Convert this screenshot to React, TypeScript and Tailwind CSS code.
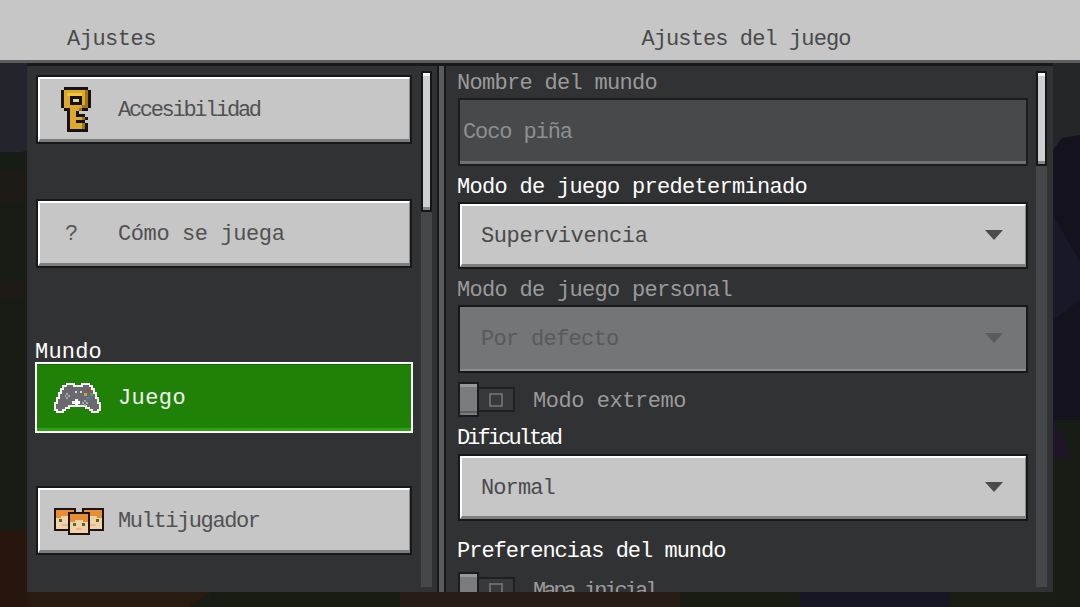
const KEY_ROWS = [
  ".KKKKKKKK.",
  "KYYYYYYYDK",
  "KYLLLLLYDK",
  "KYYKKKKYDK",
  "KYYKWWKYDK",
  "KYYKKKKYDK",
  "KYYYYYYDDK",
  ".KKYYYDKK.",
  "..KYYK....",
  "..KYYKKK..",
  "..KYYYYDK.",
  "..KYYKKK..",
  "..KYYYYDK.",
  "..KYYYYDK.",
  "..KKKKKKK.",
];

const KEY_COLORS: Record<string, string> = {
  K: "#17120a",
  Y: "#dca92c",
  L: "#f0c63f",
  D: "#9c7416",
  W: "#d8d2b8",
};

function KeyIcon() {
  return (
    <svg width="30" height="45" viewBox="0 0 10 15" shapeRendering="crispEdges">
      {KEY_ROWS.map((row, y) =>
        row.split("").map((c, x) =>
          c === "." ? null : (
            <rect key={`${x}-${y}`} x={x} y={y} width="1" height="1" fill={KEY_COLORS[c]} />
          )
        )
      )}
    </svg>
  );
}

function ControllerIcon() {
  return (
    <svg width="48" height="34" viewBox="0 0 50 35">
      <path
        d="M13 2h8v2h8V2h8v2h3v3h2v4h2v5h2v6h2v7h-2v2h-6v-2h-3v-2h-4v-2H16v2h-4v2H9v2H3v-2H1v-7h2v-6h2v-5h2V7h2V4h4z"
        fill="#69696e"
        stroke="#f4f4f4"
        strokeWidth="2"
        shapeRendering="crispEdges"
      />
      <g shapeRendering="crispEdges">
        <rect x="22" y="9" width="2" height="2" fill="#d8d8d8" />
        <rect x="27" y="9" width="2" height="2" fill="#d8d8d8" />
        <rect x="13" y="11" width="2" height="2" fill="#a8a8ac" />
        <rect x="11" y="13" width="2" height="2" fill="#a8a8ac" />
        <rect x="15" y="13" width="2" height="2" fill="#a8a8ac" />
        <rect x="13" y="15" width="2" height="2" fill="#a8a8ac" />
        <rect x="34" y="7" width="4" height="3" fill="#b0444c" />
        <rect x="31" y="11" width="3" height="3" fill="#c6a838" />
        <rect x="38" y="11" width="3" height="3" fill="#5a9a4c" />
        <rect x="33" y="15" width="4" height="3" fill="#3f86c4" />
        <rect x="19" y="20" width="8" height="3" fill="#ffffff" />
        <rect x="21.5" y="17.5" width="3" height="8" fill="#ffffff" />
        <rect x="31" y="19" width="2" height="2" fill="#a8a8ac" />
        <rect x="29" y="21" width="2" height="2" fill="#a8a8ac" />
        <rect x="33" y="21" width="2" height="2" fill="#a8a8ac" />
        <rect x="31" y="23" width="2" height="2" fill="#a8a8ac" />
      </g>
    </svg>
  );
}

function Face({ x, y }: { x: number; y: number }) {
  return (
    <g transform={`translate(${x} ${y})`} shapeRendering="crispEdges">
      <rect width="22" height="23" fill="#1a140e" />
      <rect x="2" y="2" width="18" height="19" fill="#f3d2a8" />
      <rect x="2" y="2" width="18" height="6" fill="#e98f33" />
      <rect x="2" y="8" width="5" height="2" fill="#e98f33" />
      <rect x="15" y="8" width="5" height="2" fill="#e98f33" />
      <rect x="5" y="11" width="3" height="3" fill="#4a6b2e" />
      <rect x="14" y="11" width="3" height="3" fill="#4a6b2e" />
      <rect x="8" y="16" width="6" height="2" fill="#e8b98c" />
    </g>
  );
}

function FacesIcon() {
  return (
    <svg width="50" height="28" viewBox="0 0 50 28">
      <Face x={0} y={0} />
      <Face x={28} y={0} />
      <Face x={14} y={4} />
    </svg>
  );
}

function ListButton({
  label,
  icon,
  labelClass,
  iconClass,
}: {
  label: string;
  icon: React.ReactNode;
  labelClass: string;
  iconClass: string;
}) {
  return (
    <div className="h-[69px] w-[376px] border-2 border-[#17181a]">
      <div className="flex h-full items-center border-t-2 border-l-2 border-r border-b-[3px] border-t-white border-l-white border-r-[#8b8b8b] border-b-[#7d7d7e] bg-[#c6c6c6]">
        <div className={`flex w-[78px] ${iconClass}`}>{icon}</div>
        <span className={`pt-[4px] text-[#515153] ${labelClass}`}>{label}</span>
      </div>
    </div>
  );
}

function Dropdown({
  label,
  labelClass,
  disabled,
  className,
}: {
  label: string;
  labelClass: string;
  disabled?: boolean;
  className: string;
}) {
  return (
    <div className={`w-[570px] border-2 border-[#17181a] ${className}`}>
      {disabled ? (
        <div className="flex h-full items-center justify-between border-b-2 border-b-[#8c8c8d] bg-[#747576] pl-[21px] pr-[23px]">
          <span className={`pt-[4px] text-[#59595b] ${labelClass}`}>{label}</span>
          <div className="h-0 w-0 border-x-[9px] border-t-[10px] border-x-transparent border-t-[#5b5b5d]" />
        </div>
      ) : (
        <div className="flex h-full items-center justify-between border-t-2 border-l-2 border-r border-b-[3px] border-t-white border-l-white border-r-[#8b8b8b] border-b-[#7d7d7e] bg-[#c6c6c6] pl-[19px] pr-[22px]">
          <span className={`pt-[4px] text-[#4a4a4c] ${labelClass}`}>{label}</span>
          <div className="h-0 w-0 border-x-[9px] border-t-[10px] border-x-transparent border-t-[#4b4b4d]" />
        </div>
      )}
    </div>
  );
}

function Toggle() {
  return (
    <div className="flex h-[35px] w-[57px] shrink-0 items-center">
      <div className="h-[35px] w-[21px] shrink-0 border-2 border-[#1b1c1e] bg-[#7b7c7d]">
        <div className="h-[3px] bg-[#98999a]" />
        <div className="mt-[24px] h-[2px] bg-[#5c5d5e]" />
      </div>
      <div className="flex h-[25px] w-[36px] items-center justify-center border-y-2 border-r-2 border-[#1f2022] bg-[#38393a]">
        <div className="h-[14px] w-[14px] border-2 border-[#68696a]" />
      </div>
    </div>
  );
}

function ScrollBar({ thumbClass }: { thumbClass: string }) {
  return (
    <div className="mt-[5px] flex h-[516px] w-[11px] flex-col bg-[#46474a]">
      <div className={`w-[11px] border-2 border-[#151618] ${thumbClass}`}>
        <div className="flex h-full flex-col bg-[#cfd0d3]">
          <div className="h-[3px] bg-white" />
          <div className="flex-1" />
          <div className="h-[3px] bg-[#85868a]" />
        </div>
      </div>
    </div>
  );
}

export default function App() {
  return (
    <div className="relative h-[607px] w-[1080px] overflow-hidden bg-[#171c14] font-['Liberation_Mono',monospace] text-[22px] leading-[22px]">
      {/* world behind the menu */}
      <svg className="absolute inset-0" width="1080" height="607" viewBox="0 0 1080 607">
        <rect x="0" y="60" width="27" height="92" fill="#24252c" />
        <polygon points="0,160 27,150 27,530 0,530" fill="#171c14" />
        <rect x="0" y="170" width="27" height="32" fill="#1e1a16" />
        <rect x="0" y="280" width="27" height="18" fill="#1e1a16" />
        <polygon points="0,530 27,530 27,607 0,607" fill="#26160e" />
        <polygon points="27,592 210,592 190,607 27,607" fill="#2a1b11" />
        <rect x="210" y="592" width="190" height="15" fill="#171c13" />
        <rect x="400" y="592" width="280" height="15" fill="#261b15" />
        <rect x="680" y="592" width="120" height="15" fill="#171c13" />
        <rect x="800" y="592" width="150" height="15" fill="#171624" />
        <rect x="950" y="592" width="130" height="15" fill="#1a1d14" />
        <rect x="1053" y="60" width="27" height="90" fill="#25262a" />
        <polygon points="1053,150 1062,138 1080,135 1080,420 1053,420" fill="#14121c" />
        <polygon points="1053,215 1080,262 1080,300 1053,320" fill="#191829" />
        <polygon points="1053,420 1080,420 1080,607 1053,607" fill="#171c14" />
        <polygon points="1053,420 1072,458 1053,458" fill="#1f1428" />
      </svg>

      <div className="relative">
        {/* header */}
        <header className="flex h-[60px] items-center bg-[#c6c6c6] pt-5 text-[#4a4a4c]">
          <div className="w-[412px] pl-[67px]">
            <span className="tracking-[-0.5px]">Ajustes</span>
          </div>
          <div className="flex w-[668px] justify-center">
            <span className="tracking-[-0.9px]">Ajustes del juego</span>
          </div>
        </header>
        <div className="h-[3px] bg-[#5c5d5e]" />

        <main className="ml-[27px] flex h-[529px] w-[1026px] border-t-[3px] border-[#17181a] bg-[#313233]">
          {/* left column */}
          <section className="flex w-[412px] shrink-0 border-r-2 border-[#17181a]">
            <div className="w-[394px] shrink-0 pl-[9px] pt-[9px]">
              <ListButton
                label="Accesibilidad"
                labelClass="tracking-[-2.3px]"
                iconClass="pl-[21px]"
                icon={<KeyIcon />}
              />
              <div className="mt-[55px]">
                <ListButton
                  label="Cómo se juega"
                  labelClass="tracking-[-0.4px]"
                  iconClass="pl-[25px] pt-[4px]"
                  icon={<span className="text-[#59595b]">?</span>}
                />
              </div>
              <div className="mt-[72px] -ml-[1px] h-[22px] pt-[2px] text-white tracking-[0.2px]">Mundo</div>
              <div className="-ml-[1px] h-[71px] w-[378px] border-2 border-white">
                <div className="flex h-full items-center border-t border-b-[3px] border-t-[#166304] border-b-[#2ea312] bg-[#1f8206]">
                  <div className="flex w-[81px] pl-[17px] pt-[4px]">
                    <ControllerIcon />
                  </div>
                  <span className="pt-[4px] text-[#f2f2f2] tracking-[0.4px]">Juego</span>
                </div>
              </div>
              <div className="mt-[53px]">
                <ListButton
                  label="Multijugador"
                  labelClass="tracking-[-1.4px]"
                  iconClass="pl-[14px] pt-[4px]"
                  icon={<FacesIcon />}
                />
              </div>
            </div>
            <ScrollBar thumbClass="h-[141px]" />
          </section>

          {/* divider */}
          <div className="w-[5px] shrink-0 bg-[#5a5b5c]" />

          {/* right column */}
          <section className="flex min-w-0 flex-1 overflow-hidden border-l-2 border-[#17181a]">
            <div className="w-[590px] shrink-0 pl-[11px] pt-[5px]">
              <div className="h-[22px] pt-[2px] text-[#9a9a9b] tracking-[-0.7px]">Nombre del mundo</div>
              <div className="ml-[1px] mt-[5px] h-[68px] w-[570px] border-2 border-[#1c1d1f]">
                <div className="flex h-full items-center border-b-[3px] border-b-[#707172] bg-[#48494a] pl-[3px]">
                  <span className="pt-[4px] text-[#8f8f90] tracking-[-1.1px]">Coco piña</span>
                </div>
              </div>
              <div className="mt-[9px] h-[22px] pt-[2px] text-white tracking-[-0.7px]">Modo de juego predeterminado</div>
              <Dropdown
                className="ml-[1px] mt-[5px] h-[67px]"
                label="Supervivencia"
                labelClass="tracking-[-0.4px]"
              />
              <div className="mt-[9px] h-[22px] pt-[2px] text-[#9a9a9b] tracking-[-0.7px]">Modo de juego personal</div>
              <Dropdown
                className="ml-[1px] mt-[5px] h-[68px]"
                label="Por defecto"
                labelClass="tracking-[-0.7px]"
                disabled
              />
              <div className="ml-[1px] mt-[9px] flex items-center">
                <Toggle />
                <span className="ml-[18px] pt-[4px] text-[#9a9a9b] tracking-[-0.45px]">Modo extremo</span>
              </div>
              <div className="mt-[9px] h-[22px] pt-[2px] text-white tracking-[-2.9px]">Dificultad</div>
              <Dropdown
                className="ml-[1px] mt-[6px] h-[67px]"
                label="Normal"
                labelClass="tracking-[-0.9px]"
              />
              <div className="mt-[18px] h-[22px] pt-[2px] text-white tracking-[-1px]">Preferencias del mundo</div>
              <div className="ml-[1px] mt-[11px] flex items-center">
                <Toggle />
                <span className="ml-[18px] pt-[4px] text-[#9a9a9b] tracking-[-3px]">Mapa inicial</span>
              </div>
            </div>
            <ScrollBar thumbClass="h-[95px]" />
          </section>
        </main>
      </div>
    </div>
  );
}
